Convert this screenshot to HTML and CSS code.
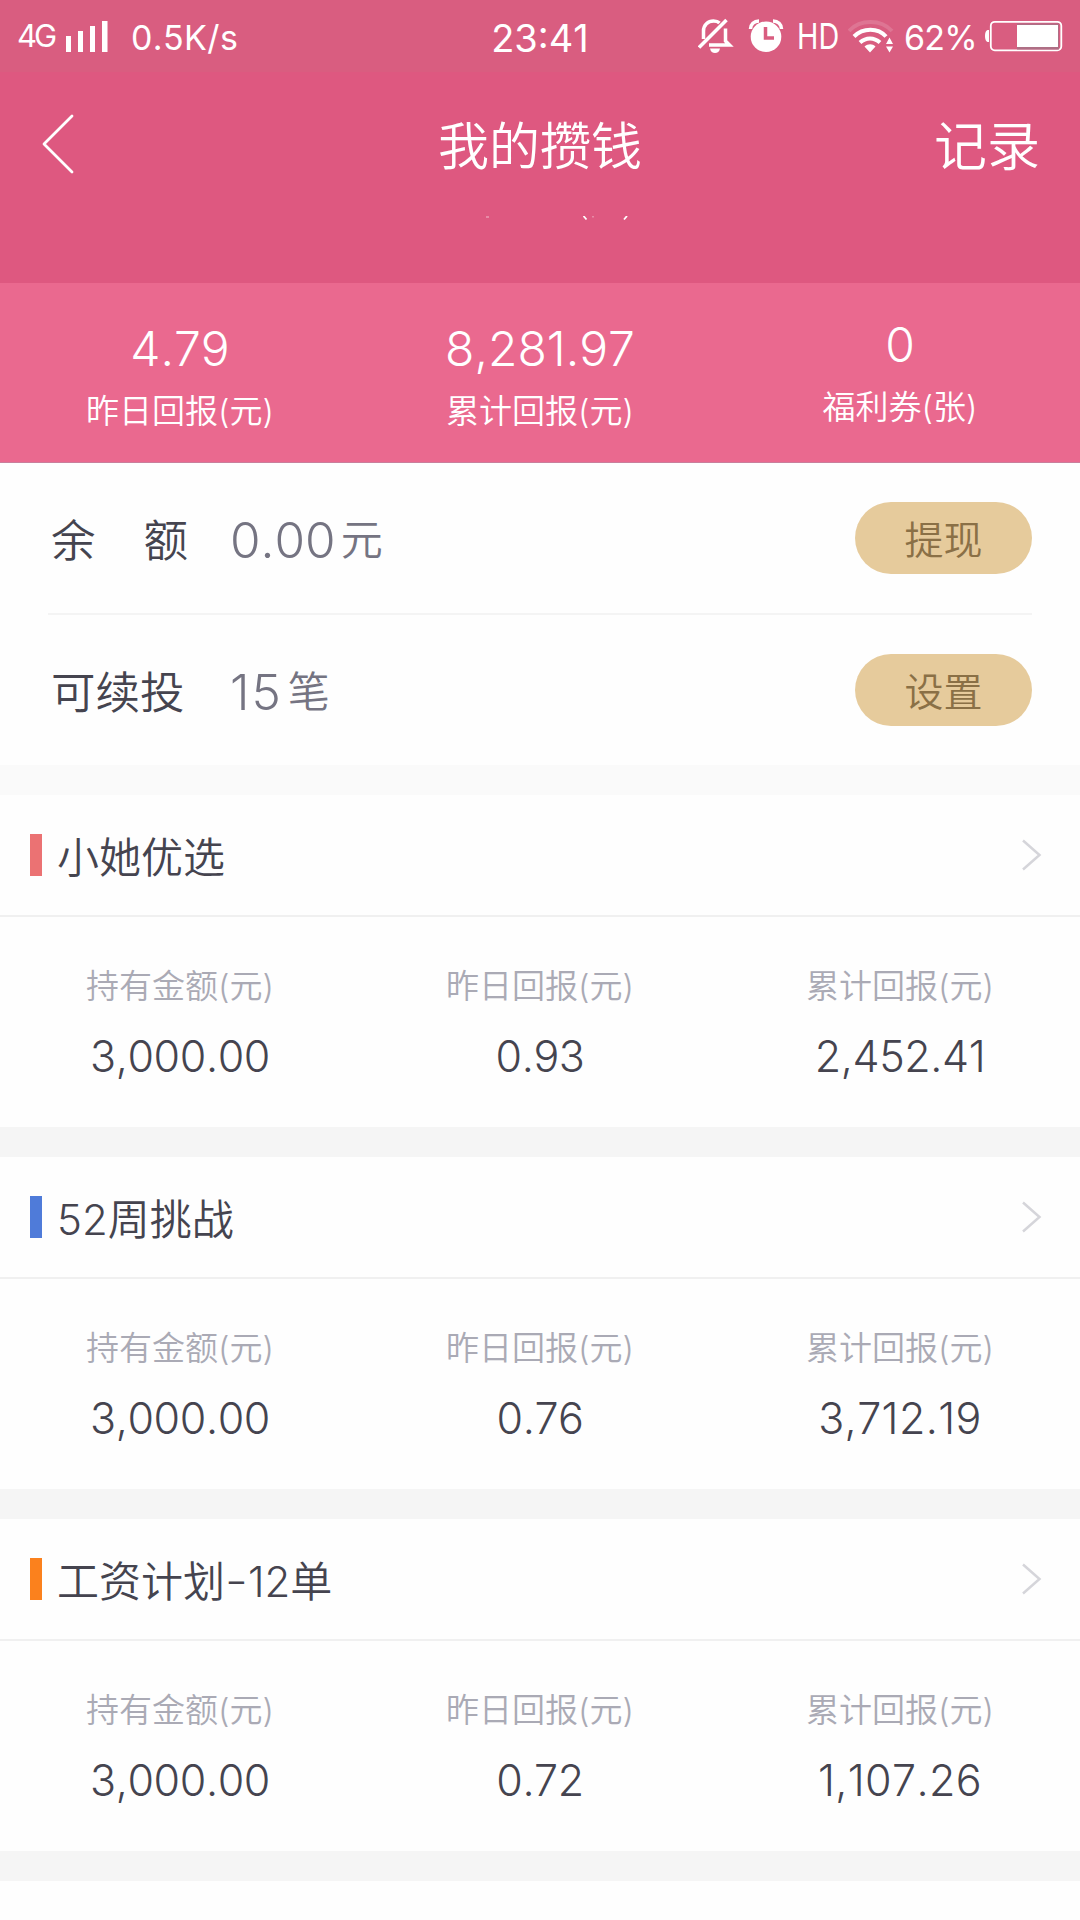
FILE: index.html
```html
<!DOCTYPE html>
<html lang="zh-CN">
<head>
  <meta charset="UTF-8" />
  <meta name="viewport" content="width=device-width, initial-scale=1" />
  <title>我的攒钱</title>
  <link rel="stylesheet" href="styles.css">
</head>
<body>

<!-- 状态栏 -->
<div class="status">
  <div class="status-left">
    <span class="net">4G</span>
    <svg class="signal" width="42" height="31" viewBox="0 0 42 31" fill="#fff">
      <path d="M0 15h5v16H0zM12 10h5v21h-5zM24 5h5v26h-5zM36 0h5.500v31H36z"/>
    </svg>
    <span class="speed">0.5K/s</span>
  </div>
  <span class="clock">23:41</span>
  <div class="status-right">
    <svg class="bell" width="36" height="36" viewBox="698 18 36 36" fill="none" stroke="#fff" stroke-width="3.500">
      <path d="M699 47.500L726.500 20"/>
      <path d="M703.500 39V31c0-6 4.500-10 10-10 2.500 0 4.500.5 6 2M725.500 28.500V41l4 4H709"/>
      <path d="M710 48.500h10c-.5 3-2.500 4.500-5 4.500s-4.500-1.500-5-4.500z" fill="#fff" stroke="none"/>
    </svg>
    <svg class="alarm" width="36" height="36" viewBox="748 18 36 36">
      <circle cx="766" cy="36.800" r="15.300" fill="#fff"/>
      <path d="M750.500 29c0-4.500 3.500-8 8.500-8M773 21c5 0 8.500 3.500 8.500 8" fill="none" stroke="#fff" stroke-width="3.500"/>
      <path d="M765.500 27v11h8.500" fill="none" stroke="#d95d80" stroke-width="3.500"/>
    </svg>
    <span class="hd">HD</span>
    <svg class="wifi" width="46" height="36" viewBox="848 18 46 36" fill="none" stroke="#fff" stroke-width="4">
      <path d="M849 31c11-12 32-12 43 0" opacity=".15"/>
      <path d="M854 36.500c9-9 24-9 32 0M860 42.500c6-5.500 14-5.500 20 0"/>
      <path d="M864.500 46.500c3.500-3 8-3 11 0L870 52.500zM886 44l3.500-6.500 3.500 6.500zM886 46.500h7l-3.500 6z" fill="#fff" stroke="none"/>
    </svg>
    <span class="percent">62%</span>
    <svg class="battery" width="78" height="32" viewBox="985 20 78 32">
      <path d="M989 30h-1.500q-2.500 1-2.500 6t2.500 6h1.500z" fill="#fff"/>
      <rect x="990.800" y="21.800" width="70.500" height="28.500" rx="4" fill="none" stroke="#fff" stroke-width="1.800"/>
      <path d="M1017 23.500h42v26h-42z" fill="#ae6f85"/>
      <path d="M1017 25h41v22h-41z" fill="#fff"/>
    </svg>
  </div>
</div>

<header class="header">
  <div class="nav">
    <svg class="back" width="34" height="62" viewBox="0 0 34 62" fill="none" stroke="#fff" stroke-width="2.800" stroke-linecap="round" stroke-linejoin="round">
      <path d="M32 3L4 31l28 28"/>
    </svg>
    <h1>我的攒钱</h1>
    <span class="record">记录</span>
  </div>
  <!-- 滚动时露出的小字边缘 -->
  <svg class="peek" width="146" height="5" viewBox="0 0 146 5" fill="none" stroke="#fff" stroke-width="1.800">
    <path d="M98.500 0l3 3.500M142 0l-3 3.500"/>
    <path d="M1 1h3M107 .5h2" opacity=".3"/>
  </svg>
</header>

<section class="summary">
  <div class="cell">
    <strong>4.79</strong>
    <span>昨日回报(元)</span>
  </div>
  <div class="cell">
    <strong>8,281.97</strong>
    <span>累计回报(元)</span>
  </div>
  <div class="cell coupon">
    <strong>0</strong>
    <span>福利券(张)</span>
  </div>
</section>

<section class="account">
  <div class="row">
    <div class="name"><span>余</span><span>额</span></div>
    <div class="amount">0.00<small>元</small></div>
    <button>提现</button>
  </div>
  <div class="row">
    <div class="name">可续投</div>
    <div class="amount count">15<small>笔</small></div>
    <button>设置</button>
  </div>
</section>

<main class="plans">
  <section class="plan">
    <div class="plan-title red">
      <h2>小她优选</h2>
      <svg class="arrow" width="20" height="32" viewBox="0 0 20 32"><path d="M1 1.500L17.500 16 1 30.500"/></svg>
    </div>
    <div class="plan-data">
      <div class="cell"><span>持有金额(元)</span><strong>3,000.00</strong></div>
      <div class="cell"><span>昨日回报(元)</span><strong>0.93</strong></div>
      <div class="cell"><span>累计回报(元)</span><strong>2,452.41</strong></div>
    </div>
  </section>

  <section class="plan">
    <div class="plan-title blue">
      <h2>52周挑战</h2>
      <svg class="arrow" width="20" height="32" viewBox="0 0 20 32"><path d="M1 1.500L17.500 16 1 30.500"/></svg>
    </div>
    <div class="plan-data">
      <div class="cell"><span>持有金额(元)</span><strong>3,000.00</strong></div>
      <div class="cell"><span>昨日回报(元)</span><strong>0.76</strong></div>
      <div class="cell"><span>累计回报(元)</span><strong class="wide">3,712.19</strong></div>
    </div>
  </section>

  <section class="plan">
    <div class="plan-title orange">
      <h2>工资计划<span class="dash">-</span>12单</h2>
      <svg class="arrow" width="20" height="32" viewBox="0 0 20 32"><path d="M1 1.500L17.500 16 1 30.500"/></svg>
    </div>
    <div class="plan-data">
      <div class="cell"><span>持有金额(元)</span><strong>3,000.00</strong></div>
      <div class="cell"><span>昨日回报(元)</span><strong>0.72</strong></div>
      <div class="cell"><span>累计回报(元)</span><strong class="wide">1,107.26</strong></div>
    </div>
  </section>
</main>

</body>
</html>
```

FILE: styles.css
```css
* {
  box-sizing: border-box;
}

body {
  margin: 0;
  height: 1920px;
  overflow: hidden;
  font-family: Inter, "Noto Sans CJK SC", sans-serif;
  font-weight: 350;
  font-kerning: none;
  color: #45444f;
  background: #fefefe;
}

h1, h2, strong {
  margin: 0;
  font-weight: 350;
}

svg {
  display: block;
  flex: none;
}

/* 状态栏 */
.status {
  display: grid;
  grid-template-columns: 1fr 100px 1fr;
  height: 72px;
  background: #d95d80;
  color: #fff;
  font-weight: 400;
  white-space: nowrap;
}

.status-left,
.status-right {
  display: flex;
}

.status-left {
  padding-left: 17px;
}

.net {
  width: 49px;
  font-size: 31px;
  line-height: 71px;
  letter-spacing: -3px;
}

.signal {
  margin-top: 21px;
}

.speed {
  margin-left: 23px;
  font-size: 34px;
  line-height: 76px;
  letter-spacing: 0.4px;
}

.clock {
  font-size: 38px;
  line-height: 76px;
  text-align: center;
}

.status-right {
  justify-content: flex-end;
  padding-right: 17px;
}

.bell, .alarm, .wifi {
  margin-top: 18px;
}

.alarm {
  margin-left: 14px;
}

.hd {
  width: 46px;
  margin-left: 13px;
  font-size: 36px;
  line-height: 73px;
  transform: scaleX(0.8);
  transform-origin: left;
}

.wifi {
  margin-left: 5px;
}

.percent {
  width: 72px;
  margin-left: 10px;
  font-size: 34px;
  line-height: 76px;
  letter-spacing: -0.8px;
}

.battery {
  margin: 20px 0 0 9px;
}

/* 标题栏 */
.header {
  height: 211px;
  background: #de5880;
  color: #fff;
}

.nav {
  display: grid;
  grid-template-columns: 1fr auto 1fr;
  align-items: center;
  height: 144px;
  padding: 0 40px;
}

.nav h1 {
  margin-top: 6px;
  font-size: 51px;
  line-height: 74px;
}

.record {
  margin-top: 6px;
  font-size: 53px;
  line-height: 74px;
  text-align: right;
}

.peek {
  margin-left: 485px;
}

/* 汇总 */
.summary {
  display: flex;
  height: 180px;
  padding-top: 36px;
  background: #ea698f;
  border-bottom: 1px solid #c97f9c;
  color: #fff;
}

.cell {
  flex: 1;
  display: flex;
  flex-direction: column;
  align-items: center;
}

.summary strong {
  font-size: 48px;
  line-height: 60px;
}

.summary span {
  margin-top: 10px;
  font-size: 33px;
  line-height: 44px;
}

.coupon {
  margin-top: -4px;
}

/* 余额 */
.account {
  padding: 0 48px;
}

.row {
  display: flex;
  align-items: center;
  height: 150px;
}

.row + .row {
  height: 152px;
  border-top: 2px solid #f4f4f4;
}

.name {
  display: flex;
  justify-content: space-between;
  width: 137px;
  margin: -2px 0 0 3px;
  font-size: 44.5px;
}

.amount {
  margin: 3px 0 0 42px;
  font-size: 49.5px;
  line-height: 70px;
  color: #757482;
}

.count {
  letter-spacing: 2px;
}

.amount small {
  margin-left: 5px;
  font-size: 42px;
  line-height: 1;
  vertical-align: 3px;
}

.row button {
  width: 177px;
  height: 72px;
  margin-left: auto;
  padding: 0 0 2px;
  border: none;
  border-radius: 36px;
  background: #e6cb9c;
  color: #8a7046;
  font: inherit;
  font-size: 39px;
}

/* 攒钱计划 */
.plan {
  height: 362px;
  border-bottom: 30px solid #f5f5f5;
}

.plans {
  border-top: 30px solid #fafafa;
}

.plan-title {
  display: flex;
  align-items: center;
  height: 122px;
  padding: 0 38px 0 30px;
  border-bottom: 2px solid #f0f0f0;
}

.plan-title::before {
  content: "";
  width: 12px;
  height: 42px;
  margin-right: 15px;
  background: #eb7273;
}

.plan-title.blue::before {
  background: #4f7bd9;
}

.plan-title.orange::before {
  background: #fb811d;
}

.plan-title h2 {
  margin-top: -2px;
  font-size: 42px;
}

.dash {
  display: inline-block;
  margin: 0 2px;
  transform: translateY(-1px) scaleX(1.2);
}

.arrow {
  margin-left: auto;
  fill: none;
  stroke: #d5d5da;
  stroke-width: 2.5;
}

.plan-data {
  display: flex;
  padding-top: 47px;
}

.plan-data span {
  font-size: 33px;
  line-height: 44px;
  color: #aaaab5;
}

.plan-data strong {
  margin-top: 23px;
  font-size: 43px;
  line-height: 50px;
  letter-spacing: -0.4px;
}

.plan-data .wide {
  letter-spacing: 0.4px;
}
```
